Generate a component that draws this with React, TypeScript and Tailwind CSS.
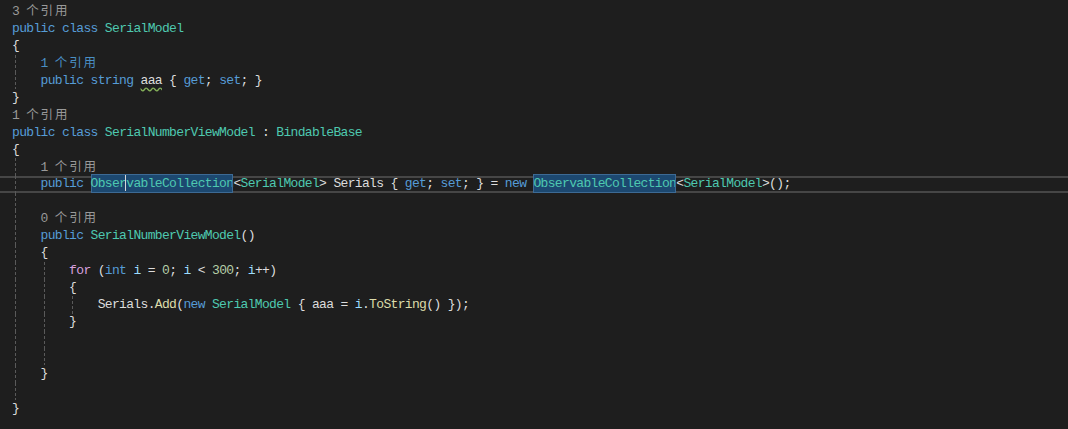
import type { ReactNode } from "react";

const K = ({ children }: { children: ReactNode }) => <span className="text-[#569cd6]">{children}</span>;
const T = ({ children }: { children: ReactNode }) => <span className="text-[#4ec9b0]">{children}</span>;
const V = ({ children }: { children: ReactNode }) => <span className="text-[#9cdcfe]">{children}</span>;
const M = ({ children }: { children: ReactNode }) => <span className="text-[#dcdcaa]">{children}</span>;
const N = ({ children }: { children: ReactNode }) => <span className="text-[#b5cea8]">{children}</span>;

// codelens "n 个引用"
function Lens({ n, hover }: { n: string; hover?: boolean }) {
  return (
    <span className={hover ? "text-[#4a8fc4]" : "text-[#999999]"}>
      {n}{" "}
      <span className="font-['Noto_Sans_CJK_SC',sans-serif] text-[12.5px] tracking-[1.8px]">个引用</span>
    </span>
  );
}

// highlighted symbol (reference highlight)
function Hl({ children }: { children: ReactNode }) {
  return <span className="bg-[#1c4870] py-[2px] outline -outline-offset-1 outline-[#3d6a94]">{children}</span>;
}

type Line = { indent?: number; guides?: number[]; current?: boolean; content?: ReactNode };

const lines: Line[] = [
  { content: <Lens n="3" /> },
  { content: <><K>public class </K><T>SerialModel</T></> },
  { content: "{" },
  { indent: 1, guides: [0], content: <Lens n="1" hover /> },
  {
    indent: 1,
    guides: [0],
    content: (
      <>
        <K>public string </K>
        <span className="underline decoration-wavy decoration-[#86b35a] underline-offset-[3px]">aaa</span>
        {" { "}<K>get</K>{"; "}<K>set</K>{"; }"}
      </>
    ),
  },
  { content: "}" },
  { content: <Lens n="1" /> },
  { content: <><K>public class </K><T>SerialNumberViewModel</T>{" : "}<T>BindableBase</T></> },
  { content: "{" },
  { indent: 1, guides: [0], content: <Lens n="1" /> },
  {
    indent: 1,
    guides: [0],
    current: true,
    content: (
      <>
        <K>public </K>
        <Hl>
          <T>
            <span className="relative">
              Obser
              <span className="absolute right-0 top-[-1px] h-[16px] w-px bg-[#d8d8d8]" />
            </span>
            vableCollection
          </T>
        </Hl>
        {"<"}<T>SerialModel</T>{"> Serials { "}<K>get</K>{"; "}<K>set</K>{"; } = "}<K>new </K>
        <Hl><T>ObservableCollection</T></Hl>
        {"<"}<T>SerialModel</T>{">();"}
      </>
    ),
  },
  { guides: [0] },
  { indent: 1, guides: [0], content: <Lens n="0" /> },
  { indent: 1, guides: [0], content: <><K>public </K><T>SerialNumberViewModel</T>()</> },
  { indent: 1, guides: [0], content: "{" },
  {
    indent: 2,
    guides: [0, 1],
    content: (
      <>
        <span className="text-[#d8a0df]">for</span>{" ("}<K>int</K> <V>i</V>{" = "}<N>0</N>{"; "}<V>i</V>{" < "}<N>300</N>{"; "}<V>i</V>{"++)"}
      </>
    ),
  },
  { indent: 2, guides: [0, 1], content: "{" },
  {
    indent: 3,
    guides: [0, 1, 2],
    content: (
      <>
        Serials.<M>Add</M>(<K>new </K><T>SerialModel</T>{" { aaa = "}<V>i</V>.<M>ToString</M>{"() });"}
      </>
    ),
  },
  { indent: 2, guides: [0, 1], content: "}" },
  { guides: [0, 1] },
  { guides: [0, 1] },
  { indent: 1, guides: [0], content: "}" },
  { guides: [0] },
  { content: "}" },
];

function CodeLine({ line }: { line: Line }) {
  const guides = line.guides ?? [];
  const cells = line.content === undefined ? guides.length : line.indent ?? 0;
  return (
    <div
      className={
        "flex h-[17.25px] items-center pl-[12px] " +
        (line.current ? "border-y-2 border-[#464646]" : "")
      }
    >
      {Array.from({ length: cells }).map((_, i) => (
        <span key={i} className="flex h-[17.25px] w-[28.56px] shrink-0 pl-[3px]">
          {guides.includes(i) && (
            <span className="block h-full w-px bg-[repeating-linear-gradient(to_bottom,#5a5a5a_0_3px,transparent_3px_5px)]" />
          )}
        </span>
      ))}
      {line.content !== undefined && <span className="whitespace-pre">{line.content}</span>}
    </div>
  );
}

export default function App() {
  return (
    <div className="min-h-screen w-full bg-[#1e1e1e] pt-[3px] font-['Liberation_Mono',monospace] text-[13px] tracking-[-0.66px] text-[#dcdcdc]">
      {lines.map((l, i) => (
        <CodeLine key={i} line={l} />
      ))}
    </div>
  );
}
